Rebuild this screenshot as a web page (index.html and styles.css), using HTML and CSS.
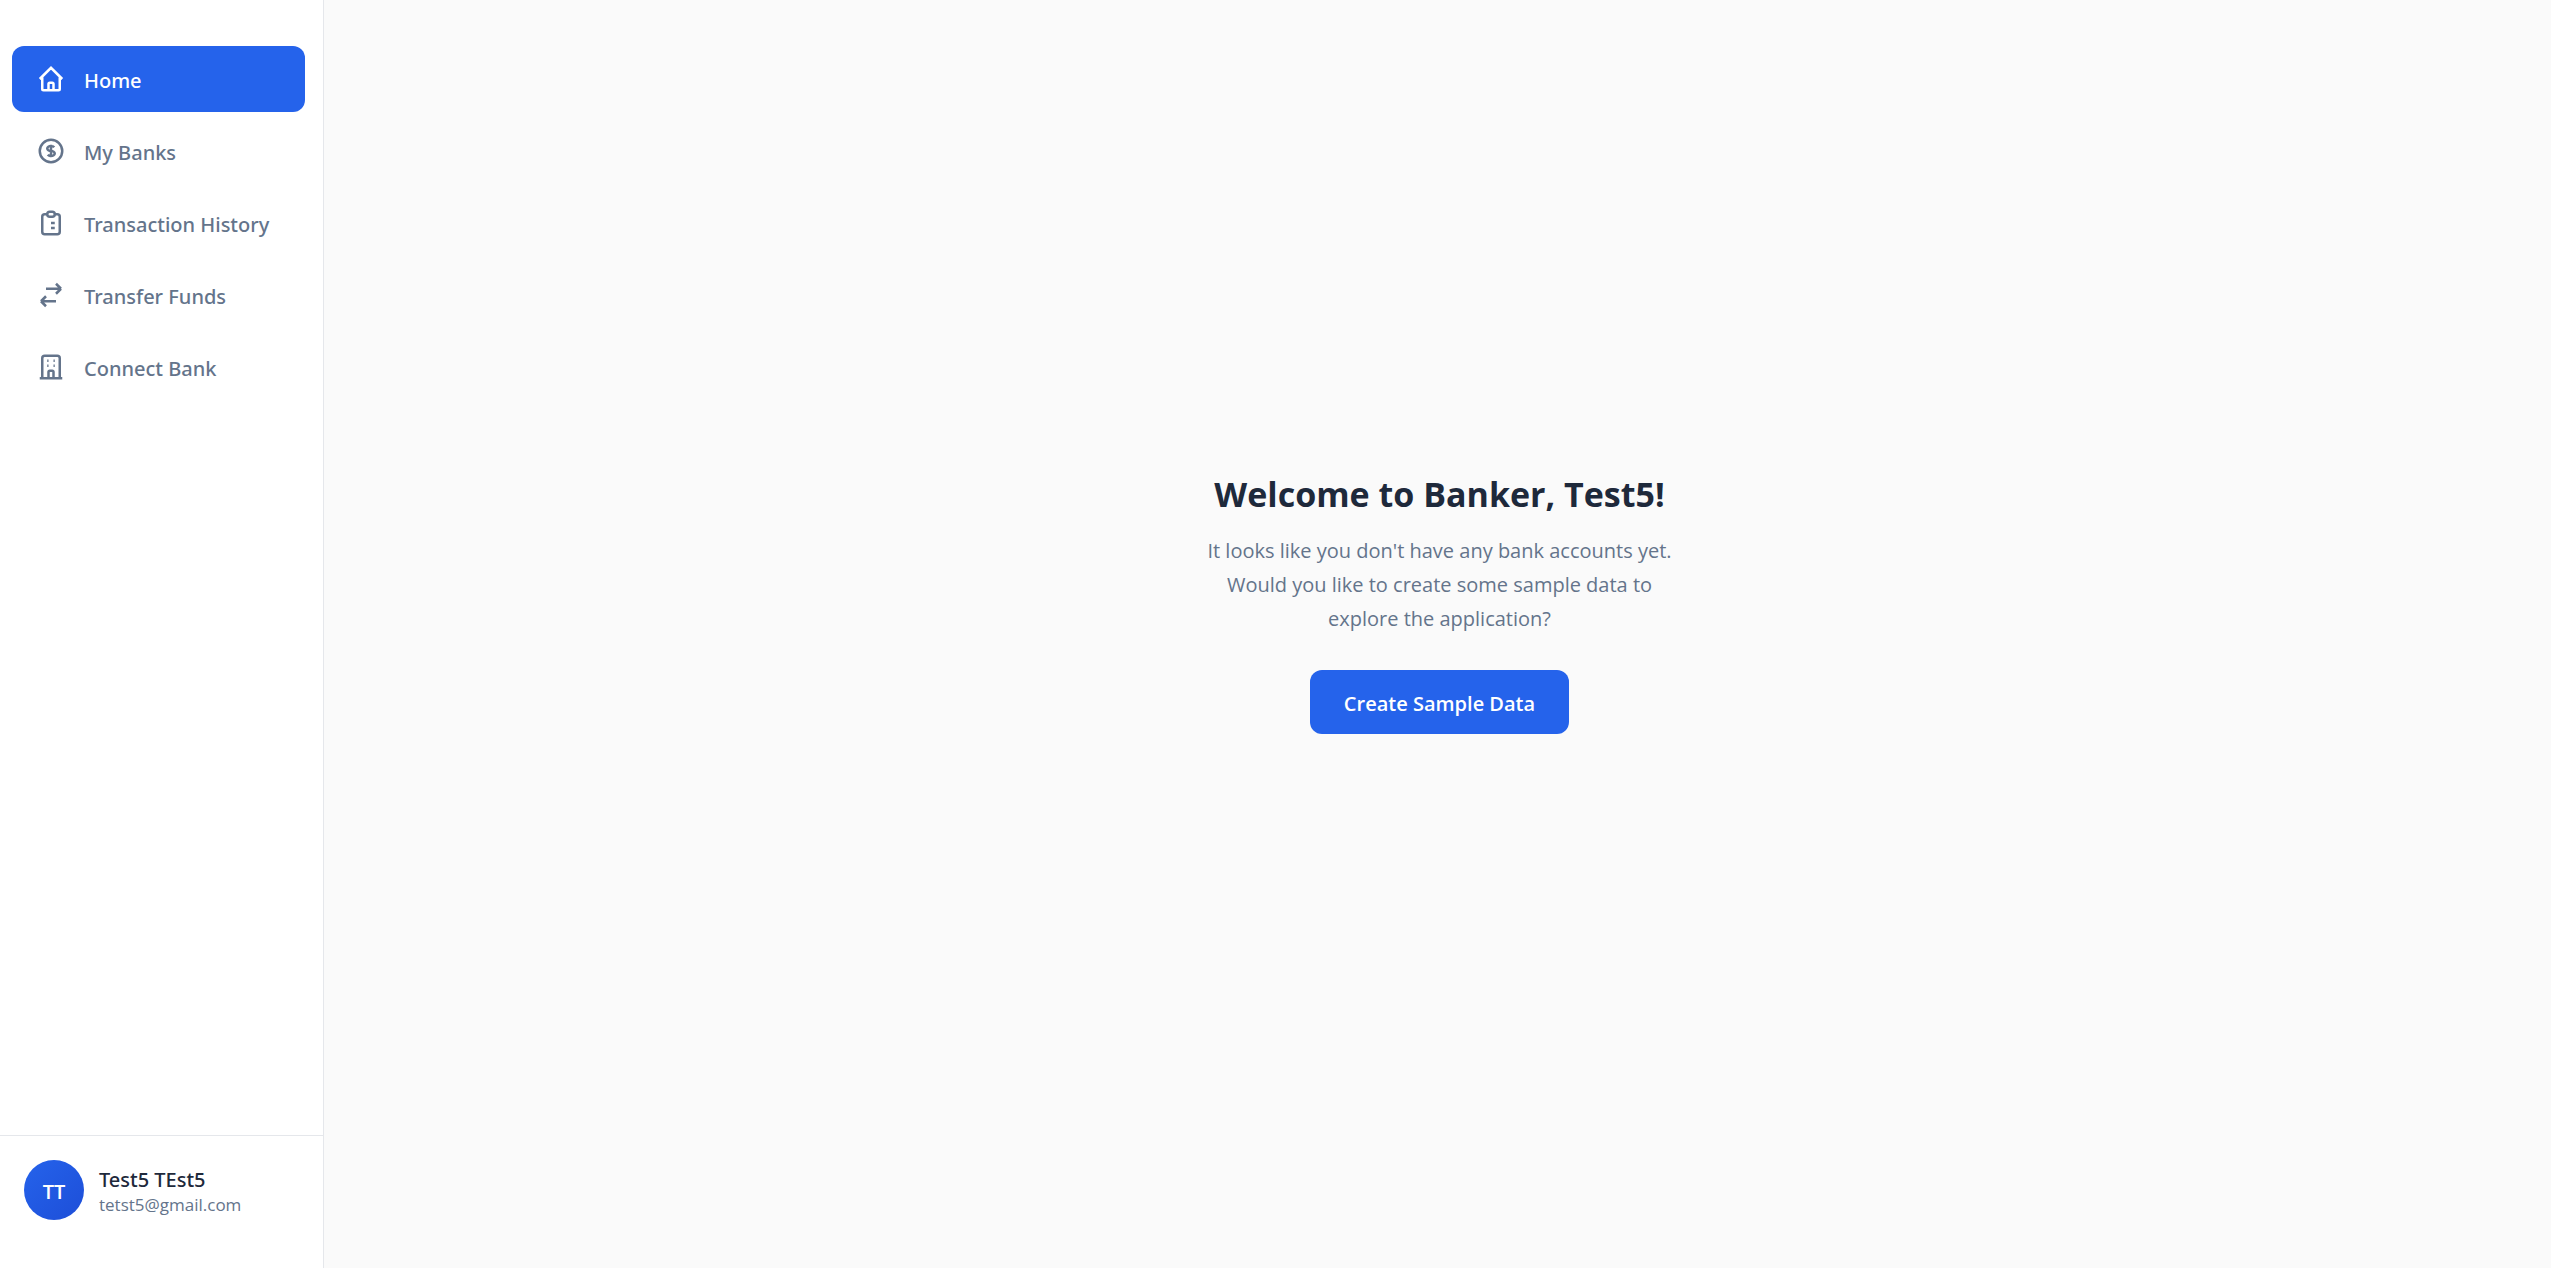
FILE: index.html
```html
<!DOCTYPE html>
<html lang="en">
<head>
<meta charset="utf-8">
<meta name="viewport" content="width=device-width, initial-scale=1">
<title>Banker</title>
<link rel="stylesheet" href="styles.css">
</head>
<body>
<div class="app">
  <aside class="sidebar">
    <nav class="nav" aria-label="Main">
      <a class="nav-link active" href="#home" aria-current="page">
        <svg class="icon" viewBox="0 0 24 24" aria-hidden="true"><path d="M3 12l2-2m0 0l7-7 7 7M5 10v10a1 1 0 001 1h3m10-11l2 2m-2-2v10a1 1 0 01-1 1h-3m-6 0a1 1 0 001-1v-4a1 1 0 011-1h2a1 1 0 011 1v4a1 1 0 001 1m-6 0h6"/></svg>
        <span class="nav-label">Home</span>
      </a>
      <a class="nav-link" href="#banks">
        <svg class="icon" viewBox="0 0 24 24" aria-hidden="true"><path d="M12 8c-1.657 0-3 .895-3 2s1.343 2 3 2 3 .895 3 2-1.343 2-3 2m0-8c1.11 0 2.08.402 2.599 1M12 8V7m0 1v8m0 0v1m0-1c-1.11 0-2.08-.402-2.599-1M21 12a9 9 0 11-18 0 9 9 0 0118 0z"/></svg>
        <span class="nav-label">My Banks</span>
      </a>
      <a class="nav-link" href="#history">
        <svg class="icon" viewBox="0 0 24 24" aria-hidden="true"><path d="M9 5H7a2 2 0 00-2 2v12a2 2 0 002 2h10a2 2 0 002-2V7a2 2 0 00-2-2h-2M9 5a2 2 0 002 2h2a2 2 0 002-2M9 5a2 2 0 012-2h2a2 2 0 012 2m-3 7h3m-3 4h3m-6-4h.01M9 16h.01"/></svg>
        <span class="nav-label">Transaction History</span>
      </a>
      <a class="nav-link" href="#transfer">
        <svg class="icon" viewBox="0 0 24 24" aria-hidden="true"><path d="M8 7h12m0 0l-4-4m4 4l-4 4m0 6H4m0 0l4 4m-4-4l4-4"/></svg>
        <span class="nav-label">Transfer Funds</span>
      </a>
      <a class="nav-link" href="#connect">
        <svg class="icon" viewBox="0 0 24 24" aria-hidden="true"><path d="M19 21V5a2 2 0 00-2-2H7a2 2 0 00-2 2v16m14 0h2m-2 0h-5m-9 0H3m2 0h5M9 7h1m-1 4h1m4-4h1m-1 4h1m-5 10v-5a1 1 0 011-1h2a1 1 0 011 1v5m-4 0h4"/></svg>
        <span class="nav-label">Connect Bank</span>
      </a>
    </nav>
    <div class="profile">
      <div class="avatar">TT</div>
      <div class="profile-text">
        <div class="profile-name">Test5 TEst5</div>
        <div class="profile-email">tetst5@gmail.com</div>
      </div>
    </div>
  </aside>
  <main class="main">
    <section class="welcome">
      <h1 class="welcome-title">Welcome to Banker, Test5!</h1>
      <p class="welcome-text">It looks like you don't have any bank accounts yet. Would you like to create some sample data to explore the application?</p>
      <button class="button" type="button">Create Sample Data</button>
    </section>
  </main>
</div>
</body>
</html>
```
FILE: styles.css
```css
* {
  box-sizing: border-box;
}

body {
  margin: 0;
  background: #fafafa;
  color: #1e293b;
  font-family: "Segoe UI", "Open Sans", "Noto Sans", sans-serif;
  font-size: 20px;
}

.app {
  display: flex;
  min-height: 100vh;
}

.sidebar {
  display: flex;
  flex: 0 0 324px;
  flex-direction: column;
  justify-content: space-between;
  padding: 46px 0 24px;
  border-right: 1px solid #e5e7eb;
  background: #fff;
}

.nav {
  display: flex;
  flex-direction: column;
  gap: 6px;
  padding: 0 18px 0 12px;
}

.nav-link {
  display: flex;
  align-items: center;
  gap: 18px;
  height: 66px;
  padding: 0 24px;
  border-radius: 12px;
  color: #64748b;
  font-family: "Segoe UI", "Noto Sans", sans-serif;
  font-weight: 500;
  text-decoration: none;
  white-space: nowrap;
}

.nav-label {
  padding-top: 2px;
}

.nav-link.active {
  background: #2563eb;
  color: #fff;
}

.icon {
  flex: none;
  width: 30px;
  height: 30px;
  fill: none;
  stroke: currentColor;
  stroke-width: 2;
}

.profile {
  display: flex;
  align-items: center;
  gap: 15px;
  padding: 24px;
  border-top: 1px solid #e5e7eb;
}

.avatar {
  display: flex;
  flex: none;
  align-items: center;
  justify-content: center;
  width: 60px;
  height: 60px;
  padding-top: 2px;
  border-radius: 50%;
  background: linear-gradient(135deg, #2563eb, #1d4ed8);
  color: #fff;
  font-weight: 600;
}

.profile-text {
  padding-top: 3px;
}

.profile-name {
  font-family: "Segoe UI", "Noto Sans", sans-serif;
  font-weight: 500;
  line-height: 26px;
}

.profile-email {
  color: #64748b;
  font-size: 17px;
  line-height: 24px;
}

.main {
  display: flex;
  flex: 1;
  align-items: center;
  justify-content: center;
  padding: 0 0 68px 4px;
}

.welcome {
  max-width: 480px;
  text-align: center;
}

.welcome-title {
  margin: 0 0 12px;
  font-size: 34px;
  font-weight: 700;
  line-height: 56px;
  white-space: nowrap;
}

.welcome-text {
  margin: 0 0 34px;
  color: #64748b;
  line-height: 34px;
}

.button {
  height: 64px;
  padding: 2px 34px 0;
  border: 0;
  border-radius: 12px;
  background: #2563eb;
  color: #fff;
  font: inherit;
  font-weight: 600;
  cursor: pointer;
}
```
